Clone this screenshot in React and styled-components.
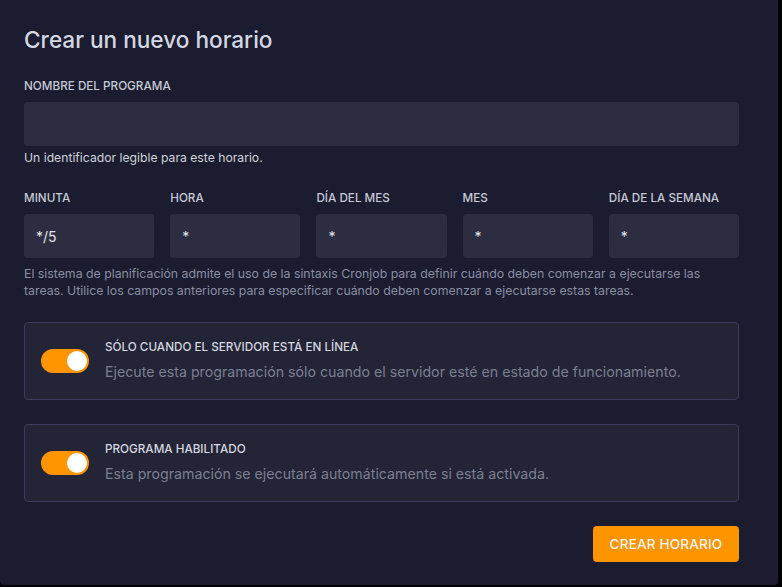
import React from "react";
import styled, { createGlobalStyle } from "styled-components";

const Global = createGlobalStyle`
  html, body { margin: 0; padding: 0; background: #000; }
  body { font-family: "Inter", "Noto Sans", sans-serif; }
  * { box-sizing: border-box; }
`;

const Panel = styled.div`
  width: 778px;
  height: 585px;
  background: #1b1c2f;
  border-radius: 0 0 4px 4px;
  padding: 27px 39px 0 24px;
  display: flex;
  flex-direction: column;
`;

const Title = styled.h1`
  margin: 0;
  font-size: 22.6px;
  font-weight: 500;
  color: #d4d8e2;
  line-height: 26px;
  letter-spacing: 0;
`;

const Label = styled.label`
  display: block;
  font-size: 11.7px;
  font-weight: 500;
  color: #c6cad6;
  text-transform: uppercase;
  line-height: 14px;
  margin-bottom: 9px;
`;

const Input = styled.div`
  height: 44px;
  background: #2c2d41;
  border-radius: 4px;
  display: flex;
  align-items: center;
  padding: 0 12px;
  font-size: 14px;
  color: #e2e5ec;
`;

const NameField = styled.div`
  margin-top: 26px;
`;

const Help = styled.p`
  margin: 5px 0 0;
  font-size: 12.2px;
  color: #d0d3dc;
  line-height: 14px;
`;

const CronGrid = styled.div`
  margin-top: 26px;
  display: grid;
  grid-template-columns: repeat(5, 1fr);
  gap: 16px;
`;

const CronNote = styled.p`
  margin: 7px 0 0;
  font-size: 12.3px;
  line-height: 17px;
  color: #8a8ea2;
`;

const Card = styled.div`
  margin-top: ${(p) => p.$mt}px;
  height: 78px;
  background: #232435;
  border: 1px solid #3b3d5a;
  border-radius: 4px;
  display: flex;
  align-items: center;
  padding: 0 16px;
  gap: 16px;
`;

const Toggle = styled.div`
  width: 48px;
  height: 24px;
  border-radius: 12px;
  background: #ff9500;
  position: relative;
  flex-shrink: 0;
  &::after {
    content: "";
    position: absolute;
    right: 2px;
    top: 2px;
    width: 20px;
    height: 20px;
    border-radius: 50%;
    background: #fff;
  }
`;

const CardText = styled.div`
  display: flex;
  flex-direction: column;
  gap: 8px;
  margin-top: -2px;
`;

const CardTitle = styled.div`
  font-size: 11.7px;
  font-weight: 500;
  color: #d4d7e0;
  text-transform: uppercase;
  line-height: 15px;
`;

const CardDesc = styled.div`
  font-size: 14.2px;
  color: #7b7f93;
  line-height: 18px;
`;

const Footer = styled.div`
  margin-top: 24px;
  display: flex;
  justify-content: flex-end;
`;

const Button = styled.button`
  height: 36px;
  width: 146px;
  border: none;
  border-radius: 4px;
  background: #fd9500;
  color: #f3f3f3;
  font-family: inherit;
  font-size: 13.5px;
  font-weight: 500;
  letter-spacing: 0.2px;
`;

const fields = [
  ["Minuta", "*/5"],
  ["Hora", "*"],
  ["Día del mes", "*"],
  ["Mes", "*"],
  ["Día de la semana", "*"],
];

export default function App() {
  return (
    <>
      <Global />
      <Panel>
        <Title>Crear un nuevo horario</Title>
        <NameField>
          <Label>Nombre del programa</Label>
          <Input />
          <Help>Un identificador legible para este horario.</Help>
        </NameField>
        <CronGrid>
          {fields.map(([l, v]) => (
            <div key={l}>
              <Label>{l}</Label>
              <Input>{v}</Input>
            </div>
          ))}
        </CronGrid>
        <CronNote>
          El sistema de planificación admite el uso de la sintaxis Cronjob para definir cuándo deben comenzar a ejecutarse las tareas. Utilice los campos anteriores para especificar cuándo deben comenzar a ejecutarse estas tareas.
        </CronNote>
        <Card $mt={23}>
          <Toggle />
          <CardText>
            <CardTitle>Sólo cuando el servidor está en línea</CardTitle>
            <CardDesc>Ejecute esta programación sólo cuando el servidor esté en estado de funcionamiento.</CardDesc>
          </CardText>
        </Card>
        <Card $mt={24}>
          <Toggle />
          <CardText>
            <CardTitle>Programa habilitado</CardTitle>
            <CardDesc>Esta programación se ejecutará automáticamente si está activada.</CardDesc>
          </CardText>
        </Card>
        <Footer>
          <Button>CREAR HORARIO</Button>
        </Footer>
      </Panel>
    </>
  );
}
